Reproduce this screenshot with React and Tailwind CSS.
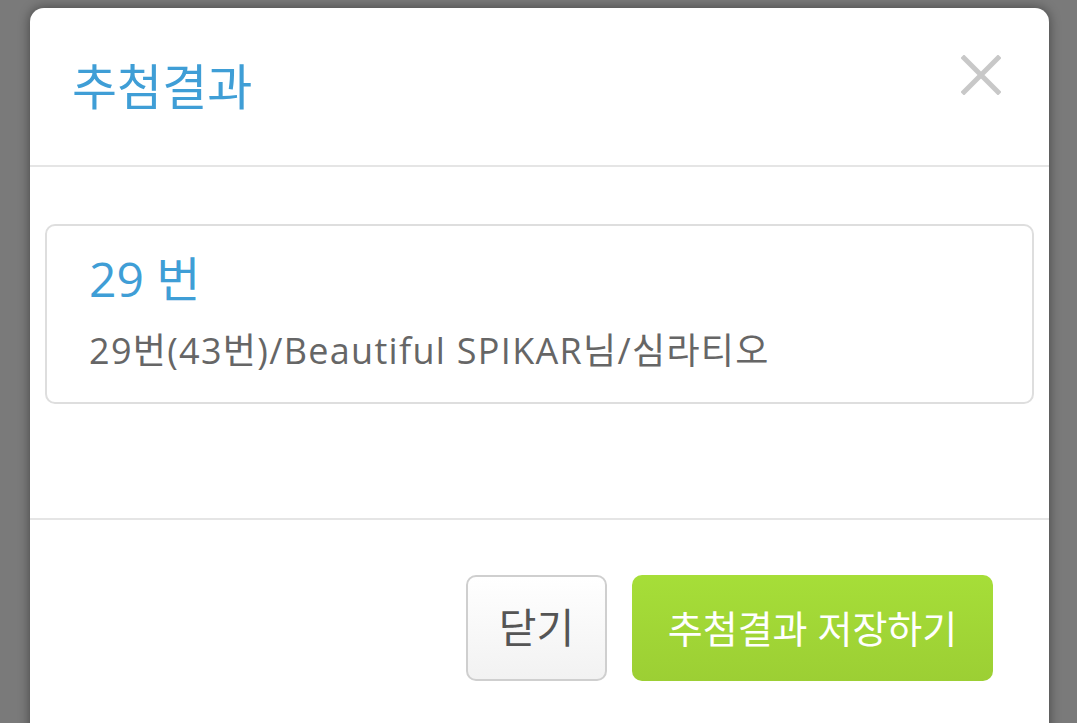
import React from 'react';

const font = { fontFamily: '"Open Sans", "Noto Sans CJK KR", sans-serif' };

const CloseIcon = () => (
    <svg width="40" height="40" viewBox="0 0 40 40" className="text-[#c8c8c8]">
        <path d="M3 3 L37 37 M37 3 L3 37" stroke="currentColor" strokeWidth="5" strokeLinecap="square" />
    </svg>
);

const App = () => {
    return (
        <div className="w-[1077px] h-[723px] overflow-hidden bg-[#7a7a7a] pt-[8px] px-[28px]" style={font}>
            <div className="ml-[2px] w-[1019px] h-[760px] bg-white rounded-t-[14px] shadow-[0_0_12px_rgba(0,0,0,0.45)] flex flex-col">
                <div className="h-[159px] shrink-0 flex items-start justify-between border-b-2 border-[#e5e5e5] pl-[42px] pr-[48px]">
                    <h1 className="mt-[46px] text-[49px] leading-[64px] text-[#3f9ed6] font-normal">추첨결과</h1>
                    <button className="mt-[47px]"><CloseIcon /></button>
                </div>
                <div className="h-[353px] shrink-0 border-b-2 border-[#e5e5e5] px-[15px] pt-[57px]">
                    <div className="h-[180px] border-2 border-[#dedede] rounded-[10px] px-[42px] pt-[21px]">
                        <div className="text-[48px] leading-[64px] text-[#3f9ed6]">29 번</div>
                        <div className="mt-[15px] text-[36px] leading-[50px] tracking-[1.3px] text-[#666666]">29번(43번)/Beautiful SPIKAR님/심라티오</div>
                    </div>
                </div>
                <div className="flex justify-end gap-[25px] pt-[55px] pr-[56px]">
                    <button className="w-[141px] h-[106px] rounded-[10px] border-2 border-[#cfcfcf] bg-gradient-to-b from-white to-[#f2f2f2] text-[41px] text-[#555555]">닫기</button>
                    <button className="w-[361px] h-[106px] rounded-[10px] bg-gradient-to-b from-[#a6de38] to-[#9ccf34] text-[38px] text-white">추첨결과 저장하기</button>
                </div>
            </div>
        </div>
    );
};

export default App;
